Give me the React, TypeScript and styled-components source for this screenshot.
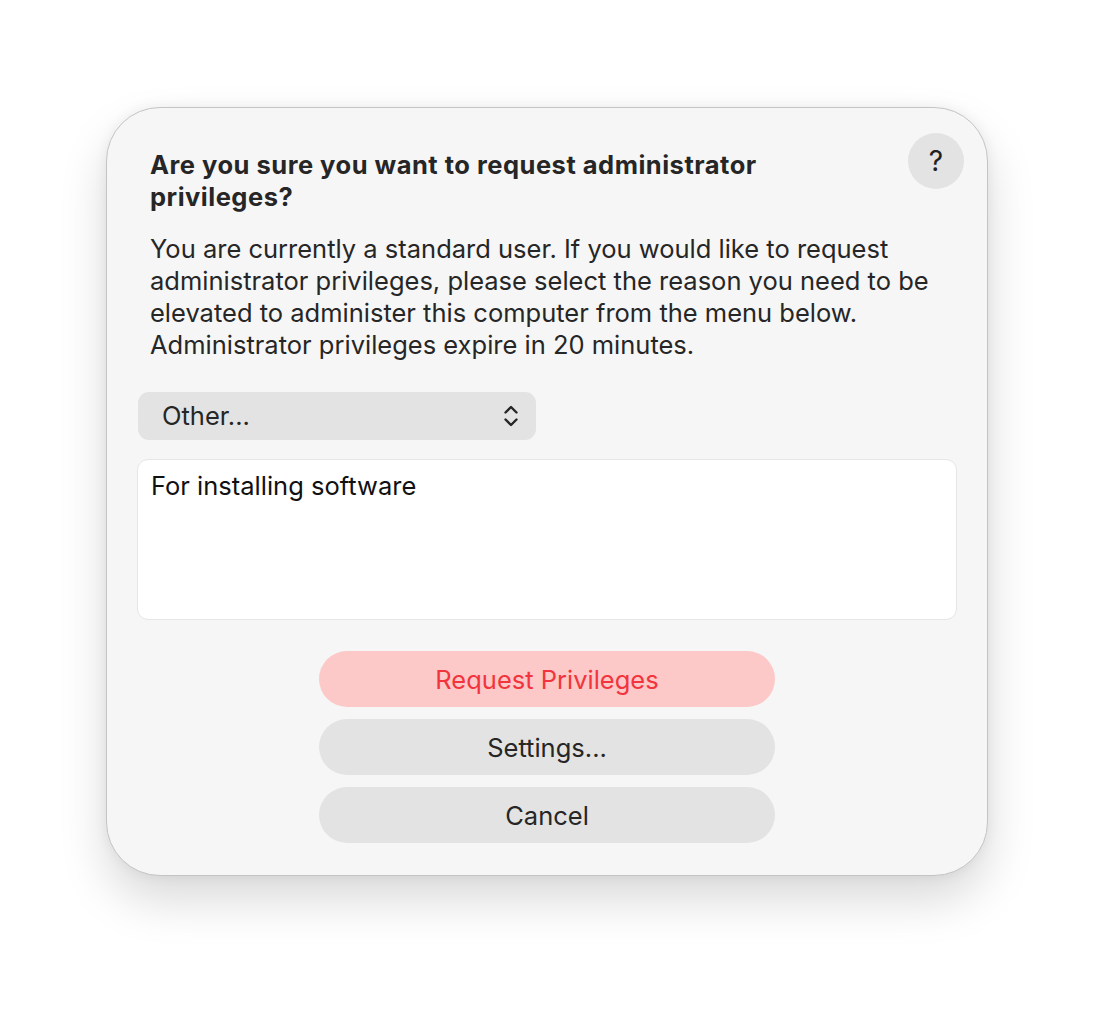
import React from 'react';
import styled, { createGlobalStyle } from 'styled-components';

const GlobalStyle = createGlobalStyle`
  html, body {
    margin: 0;
    padding: 0;
    background: #ffffff;
  }
  body {
    font-family: Inter, "Noto Sans", "Liberation Sans", sans-serif;
    color: #262626;
  }
`;

const Page = styled.div`
  width: 1108px;
  height: 1010px;
  padding: 107px 0 0 106px;
  box-sizing: border-box;
`;

const Dialog = styled.div`
  position: relative;
  width: 882px;
  height: 769px;
  box-sizing: border-box;
  background: #f6f6f6;
  border: 1px solid #c4c4c4;
  border-radius: 54px;
  box-shadow: 0 24px 48px rgba(0, 0, 0, 0.15), 0 0 14px rgba(0, 0, 0, 0.06);
  padding: 41px 30px 32px 30px;
  display: flex;
  flex-direction: column;
`;

const HelpButton = styled.button`
  position: absolute;
  top: 25px;
  right: 23px;
  width: 56px;
  height: 56px;
  border-radius: 50%;
  border: none;
  background: #e3e3e3;
  color: #222;
  font-family: inherit;
  font-size: 28px;
  font-weight: 400;
  display: flex;
  align-items: center;
  justify-content: center;
  padding: 0;
`;

const Title = styled.h1`
  margin: 0 0 0 13px;
  max-width: 740px;
  font-size: 25.5px;
  line-height: 32px;
  font-weight: 700;
  color: #262626;
  letter-spacing: 0.5px;
`;

const Message = styled.p`
  margin: 20px 0 0 13px;
  font-size: 25.5px;
  line-height: 32px;
  font-weight: 400;
  color: #262626;
`;

const Select = styled.div`
  margin-top: 31px;
  margin-left: 1px;
  width: 398px;
  height: 48px;
  box-sizing: border-box;
  border-radius: 11px;
  background: #e3e3e3;
  display: flex;
  align-items: center;
  justify-content: space-between;
  padding: 0 17px 0 24px;
  font-size: 25.5px;
  color: #262626;
`;

const TextArea = styled.div`
  margin-top: 19px;
  height: 162px;
  box-sizing: border-box;
  background: #ffffff;
  border: 1.5px solid #e6e6e6;
  border-radius: 11px;
  padding: 10px 13px;
  font-size: 25.5px;
  line-height: 32px;
  color: #111;
`;

const Actions = styled.div`
  margin-top: 31px;
  display: flex;
  flex-direction: column;
  align-items: center;
  gap: 12px;
`;

const ActionButton = styled.button<{ $primary?: boolean }>`
  width: 456px;
  height: 56px;
  border-radius: 28px;
  border: none;
  background: ${({ $primary }) => ($primary ? '#fcc8c8' : '#e3e3e3')};
  color: ${({ $primary }) => ($primary ? '#f2343c' : '#262626')};
  font-family: inherit;
  font-size: 25.5px;
  font-weight: 400;
  padding: 0;
`;

const Chevrons = () => (
  <svg width="16" height="24" viewBox="0 0 16 24" fill="none">
    <path d="M2.5 8.5 L8 3 L13.5 8.5" stroke="#262626" strokeWidth="2.4" strokeLinecap="round" strokeLinejoin="round" />
    <path d="M2.5 15.5 L8 21 L13.5 15.5" stroke="#262626" strokeWidth="2.4" strokeLinecap="round" strokeLinejoin="round" />
  </svg>
);

export default function App() {
  return (
    <>
      <GlobalStyle />
      <Page>
        <Dialog>
          <HelpButton>?</HelpButton>
          <Title>Are you sure you want to request administrator privileges?</Title>
          <Message>
            You are currently a standard user. If you would like to request administrator
            privileges, please select the reason you need to be elevated to administer this
            computer from the menu below. Administrator privileges expire in 20 minutes.
          </Message>
          <Select>
            <span>Other...</span>
            <Chevrons />
          </Select>
          <TextArea>For installing software</TextArea>
          <Actions>
            <ActionButton $primary>Request Privileges</ActionButton>
            <ActionButton>Settings...</ActionButton>
            <ActionButton>Cancel</ActionButton>
          </Actions>
        </Dialog>
      </Page>
    </>
  );
}
